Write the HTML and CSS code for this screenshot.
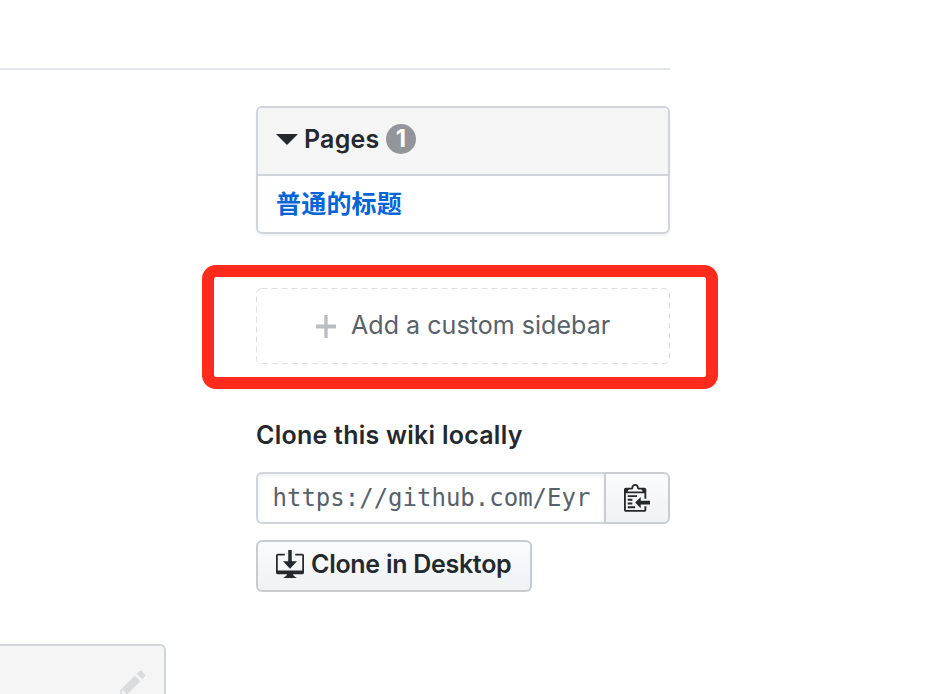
FILE: index.html
```html
<!DOCTYPE html>
<html lang="en">
<head>
<meta charset="utf-8">
<title>Wiki</title>
<link rel="stylesheet" href="styles.css">
</head>
<body>
<div class="wiki">
  <div class="rule"></div>
  <aside class="sidebar">
    <section class="pages">
      <h3 class="pages-head">
        <svg class="caret" viewBox="0 0 22 11"><path d="M0 0h22L11 11z"/></svg>
        <span class="pages-title">Pages</span>
        <span class="counter">1</span>
      </h3>
      <div class="pages-row"><a class="page-link" href="#">普通的标题</a></div>
    </section>
    <div class="custom">
      <a class="add" href="#">
        <svg class="dashes" viewBox="0 0 414 76"><rect x=".5" y=".5" width="413" height="75" rx="5"/></svg>
        <svg class="plus" viewBox="0 2 12 12" preserveAspectRatio="none"><path d="M12 9H7v5H5V9H0V7h5V2h2v5h5v2z"/></svg>
        <span class="add-text">Add a custom sidebar</span>
      </a>
      <div class="highlight"></div>
    </div>
    <h5 class="clone-title"><span>Clone this wiki locally</span></h5>
    <div class="group">
      <div class="url"><span>https://github.com/Eyr</span></div>
      <button class="copy" aria-label="Copy">
        <svg viewBox="0 0 14 16"><path d="M2 13h4v1H2v-1zm5-6H2v1h5V7zm2 3V8l-3 3 3 3v-2h5v-2H9zM4.500 9H2v1h2.500V9zM2 12h2.500v-1H2v1zm9 1h1v2c-.02.28-.11.52-.3.7-.19.18-.42.28-.7.3H1c-.55 0-1-.45-1-1V4c0-.55.45-1 1-1h3c0-1.110.89-2 2-2 1.110 0 2 .89 2 2h3c.55 0 1 .45 1 1v5h-1V6H1v9h10v-2zM2 5h8c0-.55-.45-1-1-1H8c-.55 0-1-.45-1-1s-.45-1-1-1-1 .45-1 1-.45 1-1 1H3c-.55 0-1 .45-1 1z"/></svg>
      </button>
    </div>
    <button class="desktop">
      <svg viewBox="0 0 16 15" preserveAspectRatio="none"><path d="M4 6h3V0h2v6h3l-4 4-4-4zm11-4h-4v1h4v8H1V3h4V2H1c-.55 0-1 .45-1 1v9c0 .55.45 1 1 1h5.340c-.25.61-.86 1.390-2.340 2h8c-1.480-.61-2.090-1.390-2.340-2H15c.55 0 1-.45 1-1V3c0-.55-.45-1-1-1z"/></svg>
      <span>Clone in Desktop</span>
    </button>
  </aside>
  <div class="footer-box">
    <svg viewBox="0 0 14 16"><path d="M0 12v3h3l8-8-3-3-8 8zm3 2H1v-2h1v1h1v1zm10.300-9.300L12 6 9 3l1.300-1.300a.996.996 0 0 1 1.410 0l1.590 1.590c.39.39.39 1.020 0 1.410z"/></svg>
  </div>
</div>
</body>
</html>
```
FILE: styles.css
```css
* { box-sizing: border-box; }
body {
  margin: 0;
  background: #fff;
  color: #24292e;
  font-family: Inter, "Noto Sans CJK SC", sans-serif;
  font-size: 26px;
}
svg { display: block; flex: none; fill: currentColor; }
a { text-decoration: none; }
button { margin: 0; font: inherit; color: inherit; }
.wiki {
  display: flex;
  flex-direction: column;
  width: 670px;
  height: 694px;
  padding-top: 68px;
  overflow: visible;
}
.rule { flex: none; height: 2px; background: #e3e6ea; }
.sidebar { width: 414px; margin: 36px 0 0 256px; }
.pages {
  height: 128px;
  border: 2px solid #d1d5da;
  border-radius: 6px;
  box-shadow: 0 2px 3px rgba(0, 0, 0, .06);
}
.pages-head {
  display: flex;
  align-items: center;
  height: 68px;
  margin: 0;
  padding: 0 18px 4px;
  border-bottom: 2px solid #d1d5da;
  border-radius: 4px 4px 0 0;
  background: #f5f5f5;
  font-size: 25px;
  font-weight: 600;
}
.caret { width: 22px; height: 11px; }
.pages-title { width: 76px; margin: 0 6px; letter-spacing: .2px; white-space: nowrap; }
.counter {
  width: 30px;
  height: 30px;
  border-radius: 15px;
  background: #929599;
  color: #fff;
  font-size: 24px;
  font-weight: 700;
  line-height: 30px;
  text-align: center;
}
.pages-row { display: flex; align-items: center; height: 56px; padding: 0 18px; }
.page-link { color: #0366d6; font-size: 25px; line-height: 36px; font-weight: 700; letter-spacing: .2px; }
.custom { position: relative; margin-top: 54px; }
.add {
  position: relative;
  display: flex;
  align-items: center;
  height: 76px;
  padding: 0 60px 2px;
  color: #586069;
}
.dashes { position: absolute; inset: 0; width: 414px; height: 76px; fill: none; stroke: #dcdee0; stroke-dasharray: 6 4; }
.plus { width: 20px; height: 23px; margin-top: 3px; color: #babdc3; }
.add-text { margin-left: 15px; font-size: 25px; letter-spacing: .05px; white-space: nowrap; }
.highlight {
  position: absolute;
  inset: -23px -48px -25px -54px;
  border: 12px solid #ff2c1d;
  border-radius: 14px;
  pointer-events: none;
}
.clone-title {
  height: 32px;
  margin: 55px 0 21px;
  font-size: 25px;
  line-height: 32px;
  font-weight: 600;
  letter-spacing: .25px;
  white-space: nowrap;
}
.group { display: flex; height: 52px; }
.url {
  width: 348px;
  padding: 0 0 0 14.5px;
  border: 2px solid #d1d5da;
  border-right: 0;
  border-radius: 6px 0 0 6px;
  box-shadow: inset 0 2px 4px rgba(27, 31, 35, .075);
  color: #586069;
  font-family: "DejaVu Sans Mono", monospace;
  font-size: 24px;
  line-height: 49px;
  white-space: nowrap;
  overflow: hidden;
}
.copy {
  display: flex;
  align-items: center;
  width: 66px;
  padding: 0 0 2px 18px;
  border: 2px solid #c9cdd2;
  border-radius: 0 6px 6px 0;
  background: linear-gradient(#fafbfc, #eff3f6);
}
.copy svg { width: 26px; height: 30px; }
.desktop {
  display: flex;
  align-items: center;
  width: 276px;
  height: 52px;
  margin-top: 16px;
  padding: 0 0 4px 18px;
  border: 2px solid #c8cbd0;
  border-radius: 6px;
  background: linear-gradient(#fafbfc, #eff3f6);
  font-size: 25px;
  font-weight: 600;
  letter-spacing: -.28px;
  white-space: nowrap;
}
.desktop svg { width: 28px; height: 28px; margin-right: 7px; }
.footer-box {
  display: flex;
  justify-content: flex-end;
  flex: none;
  width: 166px;
  height: 50px;
  margin-top: auto;
  padding: 22px 18px 0 0;
  border: solid #d1d5da;
  border-width: 2px 2px 0 0;
  border-radius: 0 6px 0 0;
  background: #f5f5f5;
  color: #dadbdc;
  overflow: hidden;
}
.footer-box svg { width: 26px; height: 30px; }
```
